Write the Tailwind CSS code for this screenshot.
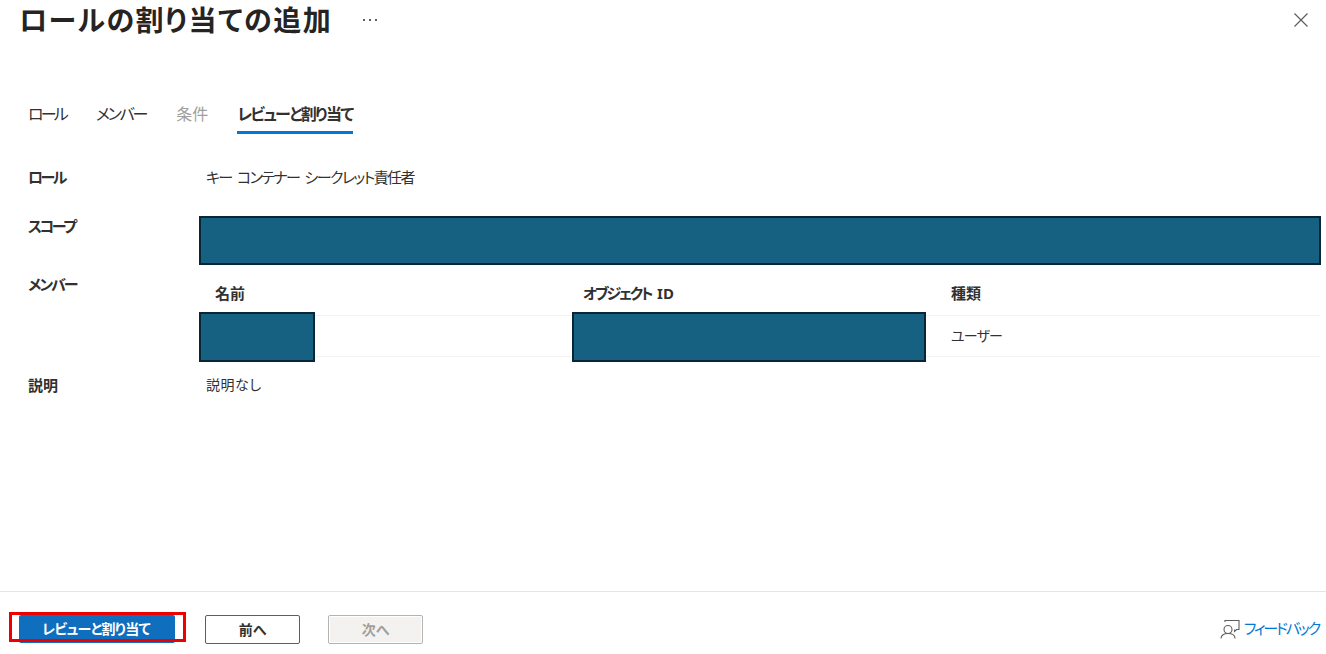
<!DOCTYPE html>
<html lang="ja">
<head>
  <meta charset="UTF-8" />
  <title>ロールの割り当ての追加</title>
  <script src="https://cdn.jsdelivr.net/npm/@tailwindcss/browser@4"></script>
</head>
<body class="bg-white">
  <div class="relative w-[1326px] h-[654px] overflow-hidden flex flex-col text-[#323130] text-[15px] leading-[22px] font-['Noto_Sans','Noto_Sans_CJK_JP',sans-serif] [font-feature-settings:'palt']">

    <!-- header -->
    <header class="h-[92px] flex items-start pl-[19px] pr-[18px]">
      <h1 class="h-10 text-[28px] leading-10 font-bold text-[#252423] tracking-[1.5px]">ロールの割り当ての追加</h1>
      <span class="ml-[31px] mt-[9px] h-[22px] flex items-center gap-[4px]">
        <i class="size-[2px] bg-[#605e5c]"></i><i class="size-[2px] bg-[#605e5c]"></i><i class="size-[2px] bg-[#605e5c]"></i>
      </span>
      <button class="ml-auto mt-[13px]">
        <svg class="size-[14px]" viewBox="0 0 14 14" fill="none" stroke="#605e5c" stroke-width="1.2"><path d="M0.5 0.5 13.5 13.5M13.5 0.5 0.5 13.5" /></svg>
      </button>
    </header>

    <!-- tabs -->
    <nav class="h-[42px] pl-7 flex gap-[30px] text-base text-[#323130]">
      <a class="pt-[10px] tracking-[-2.8px]">ロール</a>
      <a class="pt-[10px] tracking-[-2.2px]">メンバー</a>
      <a class="pt-[10px] text-[#a19f9d]">条件</a>
      <a class="-ml-px pt-[10px] font-bold border-b-[3px] border-[#0078d4] tracking-[-1.7px]">レビューと割り当て</a>
    </nav>

    <!-- summary -->
    <main class="relative pl-7 pt-[32px] grid grid-cols-[171px_1122px] content-start">
      <div class="font-bold h-[49px] tracking-[-2.5px]">ロール</div>
      <div class="pl-[7px] h-[49px] text-[#323130] tracking-[-1.6px] [word-spacing:3px]">キー コンテナー シークレット責任者</div>

      <div class="font-bold tracking-[-2.4px]">スコープ</div>
      <div class="mt-px h-[49px] bg-[#166082] border-2 border-[#0a2536]"></div>

      <div class="font-bold mt-2 tracking-[-2px]">メンバー</div>
      <div class="mt-2 relative">
        <table class="w-[1121px] table-fixed border-collapse">
          <thead>
            <tr class="h-[42px]">
              <th class="w-[368px] pl-4 pb-[1px] text-left font-bold">名前</th>
              <th class="w-[368px] pl-4 pb-[1px] text-left font-bold tracking-[-2.3px]">オブジェクト<span class="tracking-normal [word-spacing:2px]"> ID</span></th>
              <th class="pl-4 pb-[1px] text-left font-bold">種類</th>
            </tr>
          </thead>
          <tbody>
            <tr class="h-[41px] border-y border-[#f3f2f1] text-sm">
              <td class="pl-4"></td>
              <td class="pl-4"></td>
              <td class="pl-4 tracking-[-0.8px]">ユーザー</td>
            </tr>
          </tbody>
        </table>
        <div class="absolute left-0 top-[39px] w-[116px] h-[50px] bg-[#166082] border-2 border-[#0a2536]"></div>
        <div class="absolute left-[373px] top-[39px] w-[354px] h-[50px] bg-[#166082] border-2 border-[#0a2536]"></div>
      </div>

      <div class="font-bold mt-[17px]">説明</div>
      <div class="pl-[7px] pt-px mt-[17px] text-sm tracking-[0.5px]">説明なし</div>
    </main>

    <!-- footer -->
    <footer class="relative mt-auto h-[63px] border-t border-[#e5e5e5] flex items-start pt-[23px] pl-[19px] pr-[7px] text-sm font-bold">
      <button class="w-[156px] h-[28px] pr-[2px] rounded-[2px] bg-[#106ebe] text-white tracking-[-0.7px]">レビューと割り当て</button>
      <button class="ml-[30px] w-[95px] h-[29px] rounded-[2px] border border-[#605e5c] text-[#323130]">前へ</button>
      <button class="ml-[28px] w-[95px] h-[29px] rounded-[2px] border border-[#b3b3b3] shadow-[inset_0_0_0_1px_#fff] bg-[#f3f2f1] text-[#a19f9d]">次へ</button>
      <a class="ml-auto mt-[3px] flex items-center gap-1 font-normal text-[15px] text-[#0078d4] tracking-[-2.1px]">
        <svg class="w-5 h-5" viewBox="0 0 20 20" fill="none" stroke="#605e5c" stroke-width="1.1">
          <path d="M5 3V1.5H19V10.5H16.5L14.5 12.5V10.5" />
          <circle cx="8" cy="10.5" r="4" />
          <path d="M1 19.5C1 16 4 14.5 8 14.5S15 16 15 19.5" />
        </svg>
        フィードバック
      </a>
      <div class="absolute left-[9px] top-[20px] w-[177px] h-[30px] border-[3px] border-[#ee0000]"></div>
    </footer>
  </div>
</body>
</html>
